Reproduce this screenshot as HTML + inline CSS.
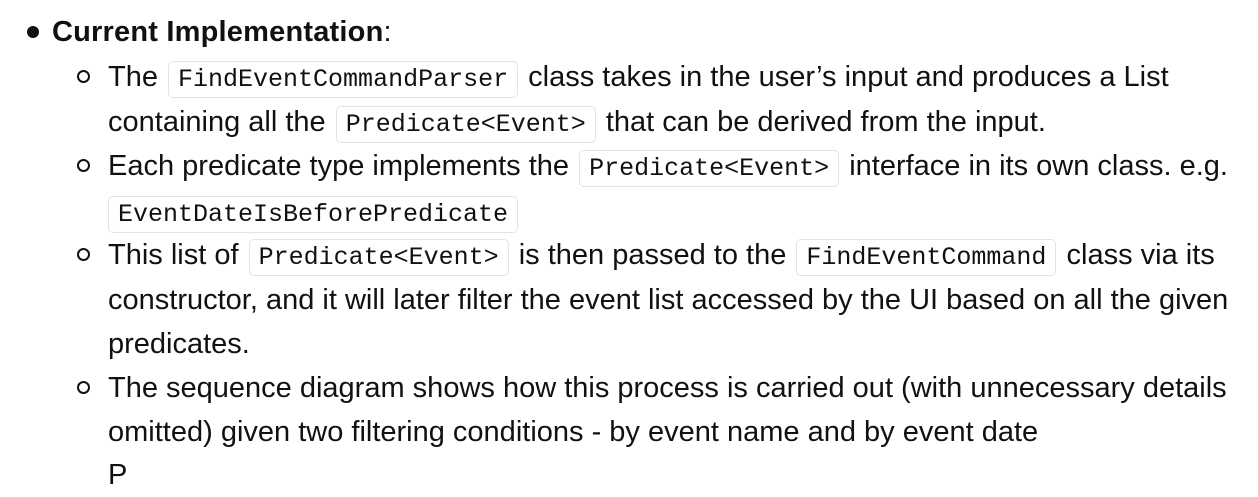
<!DOCTYPE html>
<html><head><meta charset="utf-8"><style>
body{margin:0;width:1258px;height:466px;background:#fff;overflow:hidden;position:relative;font-family:"Liberation Sans","DejaVu Sans",sans-serif;font-size:29px;color:#111}
.l{position:absolute;white-space:nowrap;line-height:44px;height:44px;margin-top:1px}
code{font-family:"Liberation Mono",monospace;font-size:25px;border:1px solid #e3e3e3;border-radius:5px;padding:3px 9px;margin:0 2px;background:#fff}
.c{position:absolute;width:9px;height:9px;border:2.5px solid #111;border-radius:50%}
.d{position:absolute;width:12px;height:12px;background:#111;border-radius:50%}
</style></head><body>
<div class="d" style="left:27px;top:26px"></div>
<div class="l" style="left:52px;top:9px"><b style="letter-spacing:0.2px">Current Implementation</b>:</div>

<div class="c" style="left:77px;top:70px"></div>
<div class="l" style="left:108px;top:54px">The <code>FindEventCommandParser</code> class takes in the user’s input and produces a List</div>
<div class="l" style="left:108px;top:99px">containing all the <code>Predicate&lt;Event&gt;</code> that can be derived from the input.</div>

<div class="c" style="left:77px;top:159px"></div>
<div class="l" style="left:108px;top:143px">Each predicate type implements the <code>Predicate&lt;Event&gt;</code> interface in its own class. e.g.</div>
<div class="l" style="left:108px;top:189px"><code style="margin-left:0">EventDateIsBeforePredicate</code></div>

<div class="c" style="left:77px;top:248px"></div>
<div class="l" style="left:108px;top:232px">This list of <code>Predicate&lt;Event&gt;</code> is then passed to the <code>FindEventCommand</code> class via its</div>
<div class="l" style="left:108px;top:277px">constructor, and it will later filter the event list accessed by the UI based on all the given</div>
<div class="l" style="left:108px;top:321px">predicates.</div>

<div class="c" style="left:77px;top:381px"></div>
<div class="l" style="left:108px;top:365px">The sequence diagram shows how this process is carried out (with unnecessary details</div>
<div class="l" style="left:108px;top:409px">omitted) given two filtering conditions - by event name and by event date</div>
<div class="l" style="left:108px;top:452px">P</div>
</body></html>
